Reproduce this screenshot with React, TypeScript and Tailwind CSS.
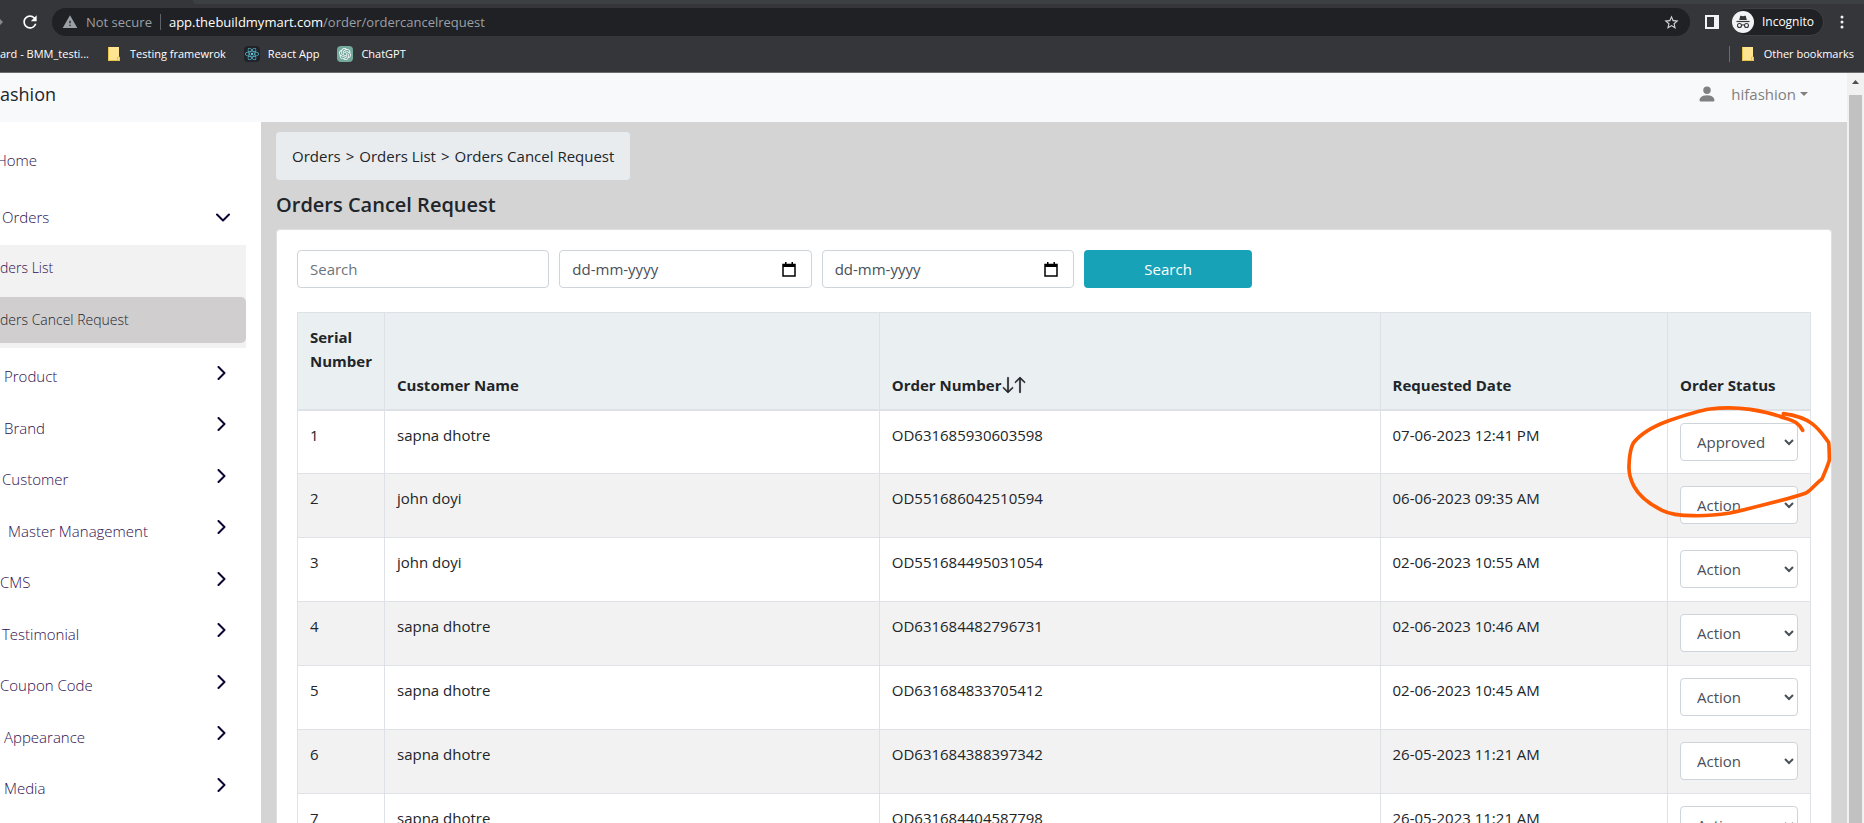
import React from "react";
import { MdRefresh, MdWarning, MdStarBorder, MdArrowForward } from "react-icons/md";
import { BsPersonFill, BsArrowDown, BsArrowUp } from "react-icons/bs";
import { FaReact } from "react-icons/fa";
import { SiOpenai } from "react-icons/si";

const orders = [
  { name: "sapna dhotre", number: "OD631685930603598", date: "07-06-2023 12:41 PM", status: "Approved" },
  { name: "john doyi", number: "OD551686042510594", date: "06-06-2023 09:35 AM", status: "Action" },
  { name: "john doyi", number: "OD551684495031054", date: "02-06-2023 10:55 AM", status: "Action" },
  { name: "sapna dhotre", number: "OD631684482796731", date: "02-06-2023 10:46 AM", status: "Action" },
  { name: "sapna dhotre", number: "OD631684833705412", date: "02-06-2023 10:45 AM", status: "Action" },
  { name: "sapna dhotre", number: "OD631684388397342", date: "26-05-2023 11:21 AM", status: "Action" },
  { name: "sapna dhotre", number: "OD631684404587798", date: "26-05-2023 11:21 AM", status: "Action" },
];

const menu = [
  { label: "Product", indent: "pl-1" },
  { label: "Brand", indent: "pl-1" },
  { label: "Customer", indent: "pl-0.5" },
  { label: "Master Management", indent: "pl-2" },
  { label: "CMS", indent: "pl-0" },
  { label: "Testimonial", indent: "pl-0.5" },
  { label: "Coupon Code", indent: "pl-0" },
  { label: "Appearance", indent: "pl-1" },
  { label: "Media", indent: "pl-1" },
];

const FolderIcon = () => (
  <svg width="12" height="14" viewBox="0 0 12 14" aria-hidden="true">
    <path d="M0 0h11v10h1v4H0z" fill="#ffe591" />
    <path d="M.5 0v13.5h11V10H9.500v3.500" fill="none" stroke="#e8c44f" />
  </svg>
);

const IncognitoIcon = () => (
  <svg width="14" height="14" viewBox="0 0 14 14" fill="none" aria-hidden="true">
    <path d="M4.200 1c1.200-.6 1.800.2 2.800.2S8.600.4 9.800 1l1 4H3.200z" fill="#35363a" />
    <path d="M.5 6.500h13" stroke="#35363a" strokeWidth="1.200" />
    <circle cx="3.500" cy="10.500" r="2" stroke="#35363a" strokeWidth="1.100" />
    <circle cx="10.500" cy="10.500" r="2" stroke="#35363a" strokeWidth="1.100" />
    <path d="M5.500 10.300c1-.7 2-.7 3 0" stroke="#35363a" strokeWidth="1.100" />
  </svg>
);

const ChevronRight = () => (
  <svg width="9" height="14" viewBox="0 0 9 14" fill="none" aria-hidden="true">
    <path d="M1.500 1l6 6-6 6" stroke="#0c0433" strokeWidth="2" strokeLinecap="round" strokeLinejoin="round" />
  </svg>
);

const ChevronDown = () => (
  <svg width="14" height="9" viewBox="0 0 14 9" fill="none" aria-hidden="true">
    <path d="M1 1.500l6 6 6-6" stroke="#0c0433" strokeWidth="2" strokeLinecap="round" strokeLinejoin="round" />
  </svg>
);

const BrowserBar = () => {
  return (
    <div className="shrink-0 border-b border-[#6a6b6e] bg-[#35363a] text-white">
      <div className="flex h-1 pl-[193px]">
        <div className="h-full flex-1 rounded-bl-lg bg-[#3c4043]" />
      </div>
      <div className="flex h-9 items-center pr-5">
        <button type="button" aria-label="Forward" className="-ml-3 text-[#8a8b8e]">
          <MdArrowForward size={18} />
        </button>
        <button type="button" aria-label="Reload" className="ml-[14px] mr-3">
          <MdRefresh size={20} />
        </button>
        <div className="flex h-7 min-w-0 flex-1 items-center rounded-full bg-[#202124] px-[10px] text-[13px]">
          <MdWarning size={16} className="text-[#9aa0a6]" />
          <span className="ml-2 whitespace-nowrap text-[#9aa0a6]">Not secure</span>
          <span className="mx-2 h-4 w-px bg-[#5f6368]" />
          <span className="flex-1 whitespace-nowrap">
            app.thebuildmymart.com<span className="text-[#9aa0a6]">/order/ordercancelrequest</span>
          </span>
          <button type="button" aria-label="Bookmark this page" className="text-[#d0d1d3]">
            <MdStarBorder size={17} />
          </button>
        </div>
        <button type="button" aria-label="Side panel" className="ml-[15px]">
          <svg width="14" height="14" viewBox="0 0 14 14">
            <path d="M0 0h14v14H0zM2 2v10h7V2z" fill="#f1f3f4" fillRule="evenodd" />
          </svg>
        </button>
        <button
          type="button"
          className="ml-3 mr-4 flex h-7 items-center gap-2 rounded-full border border-[#3f4043] bg-[#202124] pr-[9px] text-xs"
        >
          <span className="flex size-[22px] items-center justify-center rounded-full bg-[#f1f3f4]">
            <IncognitoIcon />
          </span>
          Incognito
        </button>
        <button type="button" aria-label="Menu">
          <svg width="4" height="14" viewBox="0 0 4 14" fill="#f1f3f4">
            <circle cx="2" cy="2" r="1.500" />
            <circle cx="2" cy="7" r="1.500" />
            <circle cx="2" cy="12" r="1.500" />
          </svg>
        </button>
      </div>
      <div className="flex h-8 items-center whitespace-nowrap pr-[10px] pb-1 text-[11px]">
        <a href="#" className="w-[90px]">ard - BMM_testi...</a>
        <a href="#" className="ml-[18px] flex items-center gap-[10px]">
          <FolderIcon />
          Testing framewrok
        </a>
        <a href="#" className="ml-[18px] flex items-center gap-2">
          <span className="flex size-4 items-center justify-center rounded-sm bg-[#20232a] text-[#61c5dc]">
            <FaReact size={14} />
          </span>
          React App
        </a>
        <a href="#" className="ml-[18px] flex items-center gap-2">
          <span className="flex size-4 items-center justify-center rounded-sm bg-[#74aa9c] text-white">
            <SiOpenai size={12} />
          </span>
          ChatGPT
        </a>
        <span className="ml-auto h-4 w-px bg-[#6a6b6e]" />
        <a href="#" className="ml-3 flex items-center gap-[10px]">
          <FolderIcon />
          Other bookmarks
        </a>
      </div>
    </div>
  );
};

const Sidebar = () => {
  return (
    <nav className="w-[261px] shrink-0 bg-white pt-[9px] pr-[15px] font-light text-[#2e0f4f]">
      <a href="#" className="-ml-1 flex h-[58px] items-center">
        Home
      </a>
      <button type="button" className="flex h-14 w-full items-center justify-between pl-0.5 pr-4">
        Orders
        <ChevronDown />
      </button>
      <div className="bg-[#f2f2f2] pb-[5px] text-[14px]">
        <a href="#" className="flex h-[46px] items-center">
          ders List
        </a>
        <a href="#" className="mt-[6px] flex h-[46px] items-center rounded-r-[5px] bg-[#d1cecf] text-[#212529]">
          ders Cancel Request
        </a>
      </div>
      <ul className="pt-[2px]">
        {menu.map((item) => (
          <li key={item.label} className="h-[52px] even:h-[51px]">
            <button type="button" className={`flex h-full w-full items-center justify-between pr-5 ${item.indent}`}>
              {item.label}
              <span className="pb-[7px]">
                <ChevronRight />
              </span>
            </button>
          </li>
        ))}
      </ul>
    </nav>
  );
};

const DateField = ({ label }: { label: string }) => (
  <div className="flex h-[38px] w-1/6 items-center rounded-[4px] border border-[#ced4da] bg-white pl-3 pr-[15px]">
    <input
      type="text"
      aria-label={label}
      placeholder="dd-mm-yyyy"
      className="min-w-0 flex-1 text-[#495057] outline-none placeholder:text-[#495057]"
    />
    <button type="button" aria-label="Open calendar">
      <svg width="14" height="15" viewBox="0 0 14 15" fill="none">
        <path d="M1 2.500h12V14H1z" stroke="#000" strokeWidth="1.500" />
        <path d="M1 2h12v3H1zM3 0h1.500v2H3zM9.500 0H11v2H9.500z" fill="#000" />
      </svg>
    </button>
  </div>
);

// hand drawn marker round the approved status
const Marker = () => (
  <svg
    className="pointer-events-none absolute -left-[52px] -top-[18px] z-10"
    width="208"
    height="116"
    viewBox="804 318 624 348"
    fill="none"
    overflow="visible"
    aria-hidden="true"
  >
    <path
      d="M1270 344C1300 348 1335 358 1356 374C1380 392 1392 412 1406 430C1408 448 1408 464 1408 484C1402 504 1394 522 1386 540C1366 554 1356 572 1338 582C1300 596 1250 608 1200 620C1160 630 1140 636 1110 642C1070 648 1035 651 1000 650C965 650 930 646 906 634C870 616 840 596 822 562C810 540 806 524 807 500C808 470 810 450 820 432C842 404 880 382 924 366C970 350 1010 336 1050 330C1090 325 1135 326 1170 331C1210 337 1245 346 1276 358C1306 367 1318 374 1328 394"
      stroke="#ff5a00"
      strokeWidth="11"
      strokeLinecap="round"
      strokeLinejoin="round"
    />
  </svg>
);

const OrdersTable = () => {
  return (
    <table className="mt-6 w-full table-fixed border-collapse text-left">
      <colgroup>
        <col className="w-[87px]" />
        <col className="w-[32.7%]" />
        <col className="w-[33.1%]" />
        <col />
        <col className="w-[143px]" />
      </colgroup>
      <thead className="bg-[#eaeff2]">
        <tr className="h-[97px] border-b-2 border-[#dee2e6]">
          <th className="border-x border-t border-[#dee2e6] px-3 pt-3 align-top">Serial Number</th>
          <th className="border-x border-t border-[#dee2e6] p-3 align-bottom">Customer Name</th>
          <th className="border-x border-t border-[#dee2e6] p-3 align-bottom">
            <button type="button" className="flex items-center font-bold">
              Order Number
              <BsArrowDown size={18} strokeWidth={0.6} className="-mx-[3px]" />
              <BsArrowUp size={18} strokeWidth={0.6} className="-mx-[3px]" />
            </button>
          </th>
          <th className="border-x border-t border-[#dee2e6] p-3 align-bottom">Requested Date</th>
          <th className="border-x border-t border-[#dee2e6] p-3 align-bottom">Order Status</th>
        </tr>
      </thead>
      <tbody>
        {orders.map((order, i) => (
          <tr key={order.number} className="h-16 align-top even:bg-[#f2f2f2]">
            <td className="border border-[#dee2e6] px-3 pt-3">{i + 1}</td>
            <td className="border border-[#dee2e6] px-3 pt-3">{order.name}</td>
            <td className="border border-[#dee2e6] px-3 pt-3">{order.number}</td>
            <td className="border border-[#dee2e6] px-3 pt-3">{order.date}</td>
            <td className="border border-[#dee2e6] px-3 pt-3">
              <div className="relative">
                <select
                  aria-label={`Status of order ${order.number}`}
                  defaultValue={order.status}
                  className="block h-[38px] w-full rounded-[4px] border border-[#ced4da] bg-white pl-3 text-[#495057]"
                >
                  <option>Action</option>
                  <option>Approved</option>
                </select>
                {order.status === "Approved" && <Marker />}
              </div>
            </td>
          </tr>
        ))}
      </tbody>
    </table>
  );
};

const App = () => {
  return (
    <div className="flex h-screen flex-col overflow-hidden font-['Open_Sans',sans-serif] text-[15px] leading-6 text-[#212529]">
      <BrowserBar />
      <div className="flex min-h-0 flex-1">
        <div className="flex min-w-0 flex-1 flex-col">
          <header className="flex h-[49px] shrink-0 items-center justify-between bg-[#f8f9fb] pb-[7px] pr-[39px]">
            <a href="#" className="text-[18px]">ashion</a>
            <button type="button" className="flex items-center text-[#808080]">
              <BsPersonFill size={20} />
              <span className="ml-[14px]">hifashion</span>
              <svg width="8" height="4" viewBox="0 0 8 4" className="ml-1" aria-hidden="true">
                <path d="M0 0h8L4 4z" fill="#808080" />
              </svg>
            </button>
          </header>
          <div className="flex min-h-0 flex-1">
            <Sidebar />
            <main className="min-w-0 flex-1 overflow-hidden bg-[#d4d4d4] px-[15px] pt-[10px]">
              <div className="flex">
                <div className="flex h-12 items-center gap-[5px] rounded-[4px] bg-[#e9ecef] px-4">
                  <a href="#">Orders</a>
                  <span>&gt;</span>
                  <a href="#">Orders List</a>
                  <span>&gt;</span>
                  <span>Orders Cancel Request</span>
                </div>
              </div>
              <h1 className="mt-[13px] text-[20px] font-semibold leading-6">Orders Cancel Request</h1>
              <div className="mt-3 rounded-[4px] border border-[#dfdfdf] bg-white p-5">
                <form className="flex gap-[10px]">
                  <input
                    type="text"
                    aria-label="Search"
                    placeholder="Search"
                    className="h-[38px] w-1/6 rounded-[4px] border border-[#ced4da] px-3 outline-none placeholder:text-[#6c757d]"
                  />
                  <DateField label="From date" />
                  <DateField label="To date" />
                  <button type="button" className="h-[38px] w-1/9 rounded-[4px] bg-[#17a2b8] text-white">
                    Search
                  </button>
                </form>
                <OrdersTable />
              </div>
            </main>
          </div>
        </div>
        {/* page scrollbar */}
        <div className="flex w-[17px] shrink-0 flex-col items-center bg-[#f1f1f1]">
          <div className="flex h-[22px] items-center pb-1">
            <svg width="7" height="4" viewBox="0 0 7 4" aria-hidden="true">
              <path d="M0 4l3.500-4L7 4z" fill="#505050" />
            </svg>
          </div>
          <div className="w-[13px] flex-1 bg-[#c1c1c1]" />
        </div>
      </div>
    </div>
  );
};

export default App;
